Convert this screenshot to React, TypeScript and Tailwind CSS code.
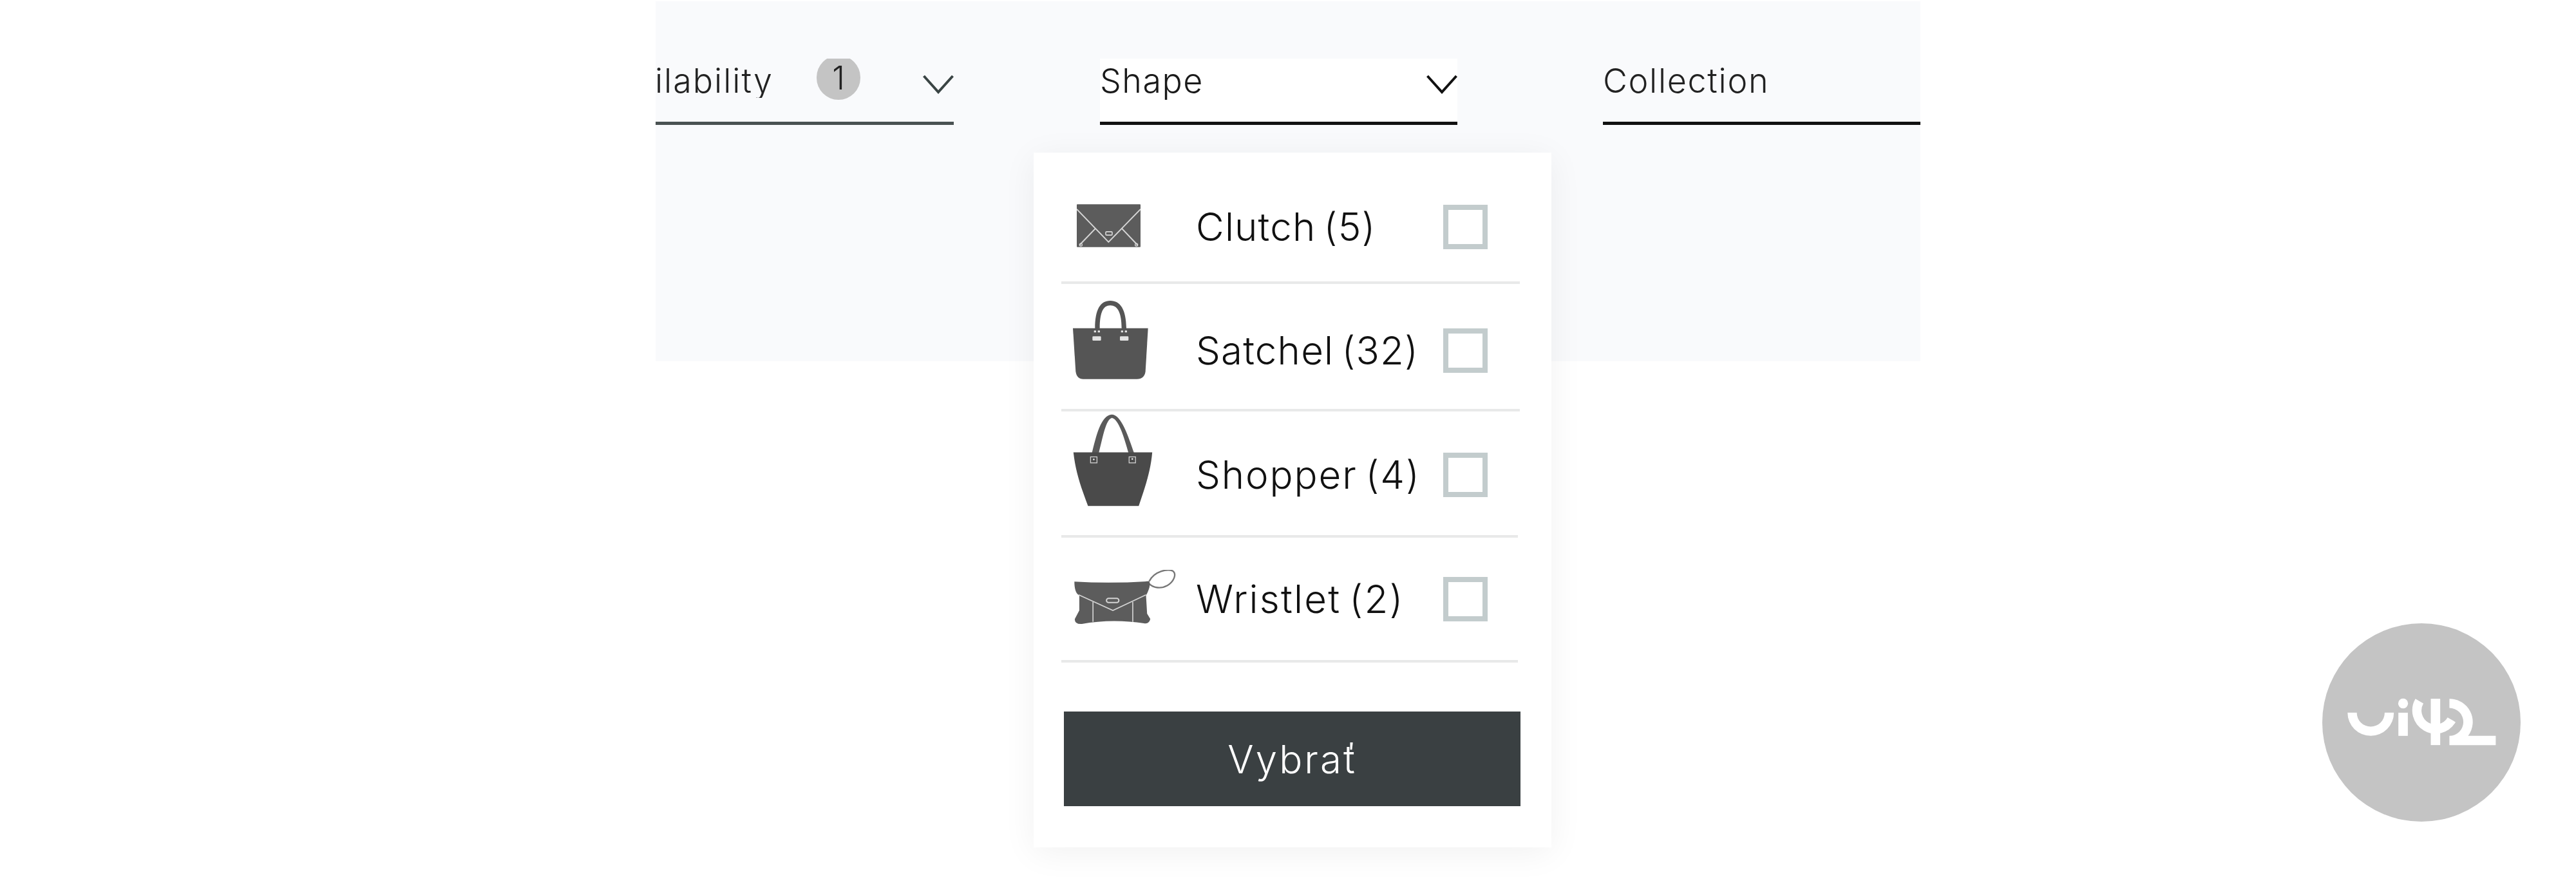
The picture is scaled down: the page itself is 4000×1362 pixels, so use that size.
const font = { fontFamily: 'Inter, "Liberation Sans", sans-serif' };

function Chevron({ className }: { className: string }) {
  return (
    <svg width="48" height="30" viewBox="0 0 48 30" fill="none" className={className}>
      <polyline points="1.5,2 24,27 46.5,2" stroke="currentColor" strokeWidth="4" />
    </svg>
  );
}

function ClutchIcon() {
  return (
    <svg width="99" height="67" viewBox="215 262 297 200" className="mb-[3px] ml-[24px]">
      <rect x="215" y="262" width="297" height="200" rx="3" fill="#5c5c5c" />
      <g fill="none" stroke="#d6d6d6" strokeWidth="6">
        <polyline points="215,285 363,438 512,285" />
        <line x1="302" y1="375" x2="228" y2="452" />
        <line x1="425" y1="375" x2="498" y2="452" />
        <rect x="350" y="390" width="30" height="16" rx="4" strokeWidth="5" />
        <circle cx="234" cy="451" r="6" strokeWidth="4" />
        <circle cx="493" cy="451" r="6" strokeWidth="4" />
      </g>
    </svg>
  );
}

function SatchelIcon() {
  return (
    <svg width="117" height="122" viewBox="197 710 351 366" className="mb-[33px] ml-[18px]">
      <path d="M300 840 C300 750 325 710 371 710 C418 710 445 750 446 840 H424 C424 765 405 732 371 732 C338 732 322 765 322 840Z" fill="#555" />
      <path d="M197 838 H547 L535 1040 Q530 1075 495 1075 H245 Q215 1075 210 1040 Z" fill="#555" />
      <g fill="#e4e4e4">
        <rect x="288" y="876" width="40" height="20" rx="4" />
        <rect x="416" y="876" width="40" height="20" rx="4" />
        <rect x="295" y="849" width="10" height="9" rx="2" />
        <rect x="313" y="849" width="10" height="9" rx="2" />
        <rect x="421" y="849" width="10" height="9" rx="2" />
        <rect x="439" y="849" width="10" height="9" rx="2" />
      </g>
    </svg>
  );
}

function ShopperIcon() {
  return (
    <svg width="124" height="143" viewBox="198 66 372 430" className="mb-[46px] ml-[18px]">
      <path d="M286 250 C306 170 328 70 380 68 C424 70 456 170 484 250 H458 C436 170 410 90 380 84 C352 90 338 170 318 250Z" fill="#5a5a5a" />
      <path d="M200 245 H568 C560 340 530 420 505 495 H268 C240 420 210 340 200 245Z" fill="#4a4a4a" />
      <g fill="none" stroke="#cfcfcf" strokeWidth="4">
        <rect x="280" y="266" width="30" height="28" />
        <rect x="460" y="266" width="30" height="28" />
      </g>
      <circle cx="295" cy="278" r="4" fill="#eee" />
      <circle cx="475" cy="276" r="4" fill="#eee" />
    </svg>
  );
}

function WristletIcon() {
  return (
    <svg width="158" height="85" viewBox="205 795 474 256" className="mb-[6px] ml-[20px]">
      <path d="M555 848 C580 800 640 790 665 800 C685 815 670 850 640 868 C610 885 575 880 555 860" fill="none" stroke="#777" strokeWidth="7" />
      <path d="M205 850 Q380 860 555 848 C565 870 545 905 540 915 L545 1000 L560 1025 Q555 1050 530 1045 C440 1030 330 1030 240 1048 Q205 1050 207 1025 L228 985 L228 915 C210 905 205 880 205 850Z" fill="#5c5c5c" />
      <g fill="none" stroke="#d4d4d4" strokeWidth="5">
        <polyline points="225,912 385,985 540,912" />
        <line x1="292" y1="945" x2="292" y2="1038" />
        <line x1="478" y1="945" x2="478" y2="1038" />
        <rect x="355" y="928" width="58" height="20" rx="10" strokeWidth="6" />
      </g>
    </svg>
  );
}

const rows = [
  { label: 'Clutch (5)', icon: <ClutchIcon />, row: 'h-[174px] pr-[50px]', text: 'tracking-[1.2px]' },
  { label: 'Satchel (32)', icon: <SatchelIcon />, row: 'h-[198px] pt-[12px] pr-[50px]', text: 'tracking-[1.2px]' },
  { label: 'Shopper (4)', icon: <ShopperIcon />, row: 'h-[196px] pt-[4px] mr-[3px] pr-[47px]', text: 'tracking-[1.9px]' },
  { label: 'Wristlet (2)', icon: <WristletIcon />, row: 'h-[194px] mr-[3px] pr-[47px]', text: 'tracking-[2.2px]' },
];

function ShapeMenu() {
  return (
    <div className="absolute left-[-103px] top-[146px] w-[804px] bg-white pt-[30px] pb-[64px] pl-[43px] pr-[49px] shadow-[0_8px_50px_rgba(0,0,0,0.06)]">
      {rows.map((r) => (
        <div key={r.label} className={`flex items-center border-b-4 border-[#e8e9e9] ${r.row}`}>
          <div className="flex w-[209px] shrink-0 items-center">{r.icon}</div>
          <span className={`ml-[2px] flex-1 -translate-x-[2px] whitespace-nowrap text-[60px] leading-none font-[350] [word-spacing:-6px] text-[#111] ${r.text}`}>{r.label}</span>
          <span className="h-[69px] w-[69px] shrink-0 border-[8px] border-[#c3cccd]" />
        </div>
      ))}
      <button className="mt-[76px] ml-[4px] flex h-[147px] w-[709px] items-center justify-center bg-[#3a4042] pl-[2px] text-[60px] leading-none font-[350] tracking-[3px] text-white">
        Vybrať
      </button>
    </div>
  );
}

function Logo() {
  return (
    <div className="absolute right-[86px] bottom-[86px] h-[308px] w-[308px] rounded-full bg-[#c4c4c4]">
      <svg width="308" height="308" viewBox="137 83 925 925" fill="#fff">
        <path d="M255 500 A108 108 0 0 0 471 500 H428 A65 65 0 0 1 298 500Z" />
        <rect x="492" y="500" width="44" height="108" />
        <circle cx="514" cy="457" r="23" />
        <rect x="643" y="435" width="44" height="216" />
        <path d="M590 446 A86.5 86.5 0 0 0 740 533" fill="none" stroke="#fff" strokeWidth="43" />
        <path d="M730 435 A108 108 0 0 1 817 608 H946 V651 H730 V608 A65 65 0 0 0 730 478Z" />
      </svg>
    </div>
  );
}

export default function App() {
  return (
    <div className="relative h-[1362px] w-full overflow-hidden bg-white pt-[2px]" style={font}>
      <div className="mx-auto flex h-[559px] w-[1964px] items-start bg-[#f9fafc] pt-[89px] text-[52px] leading-none font-[350] text-[#222]">
        <div className="flex h-[103px] w-[463px] shrink-0 items-start overflow-hidden border-b-[5px] border-[#4a5252]">
          <div className="mt-[9px] flex w-[183px] shrink-0 justify-end overflow-hidden">
            <span className="shrink-0 whitespace-nowrap tracking-[2px]">Availability</span>
          </div>
          <span className="mt-[-5px] ml-[67px] flex h-[69px] w-[68px] shrink-0 items-center justify-center rounded-full bg-[#c4c4c4] text-[50px]">1</span>
          <Chevron className="mt-[25px] ml-auto shrink-0 text-[#3a4444]" />
        </div>
        <div className="relative ml-[227px] h-[103px] w-[555px] shrink-0 border-b-[5px] border-[#111] bg-white">
          <div className="flex items-start text-[#1a1a1a]">
            <span className="mt-[9px] tracking-[1.5px]">Shape</span>
            <Chevron className="mt-[25px] ml-auto text-[#111]" />
          </div>
          <ShapeMenu />
        </div>
        <div className="ml-[226px] h-[103px] w-[493px] shrink-0 border-b-[5px] border-[#111]">
          <span className="mt-[9px] block tracking-[1.7px]">Collection</span>
        </div>
      </div>
      <Logo />
    </div>
  );
}
